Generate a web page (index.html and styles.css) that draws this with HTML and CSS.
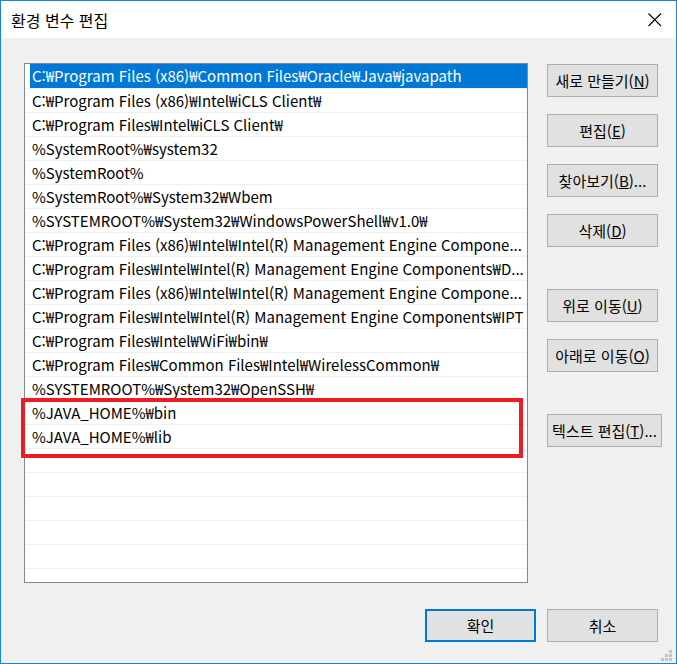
FILE: index.html
```html
<!DOCTYPE html>
<html lang="ko">
<head>
    <meta charset="UTF-8">
    <title>환경 변수 편집</title>
    <link rel="stylesheet" href="styles.css">
</head>
<body>
<div class="window">
    <div class="titlebar">
        <span class="title">환경 변수 편집</span>
        <svg class="close" width="14" height="14" viewBox="0 0 14 14">
            <path d="M0.5 0.5 L13 13 M13 0.5 L0.5 13" stroke="#000" stroke-width="1.1" fill="none"/>
        </svg>
    </div>

    <div class="content">
        <div class="main">
            <div class="list-wrap">
                <div class="list">
                    <div class="row selected"><span class="cell">C:₩Program Files (x86)₩Common Files₩Oracle₩Java₩javapath</span></div>
                    <div class="row"><span class="cell">C:₩Program Files (x86)₩Intel₩iCLS Client₩</span></div>
                    <div class="row"><span class="cell">C:₩Program Files₩Intel₩iCLS Client₩</span></div>
                    <div class="row"><span class="cell">%SystemRoot%₩system32</span></div>
                    <div class="row"><span class="cell">%SystemRoot%</span></div>
                    <div class="row"><span class="cell">%SystemRoot%₩System32₩Wbem</span></div>
                    <div class="row"><span class="cell">%SYSTEMROOT%₩System32₩WindowsPowerShell₩v1.0₩</span></div>
                    <div class="row"><span class="cell">C:₩Program Files (x86)₩Intel₩Intel(R) Management Engine Compone...</span></div>
                    <div class="row"><span class="cell">C:₩Program Files₩Intel₩Intel(R) Management Engine Components₩D...</span></div>
                    <div class="row"><span class="cell">C:₩Program Files (x86)₩Intel₩Intel(R) Management Engine Compone...</span></div>
                    <div class="row"><span class="cell">C:₩Program Files₩Intel₩Intel(R) Management Engine Components₩IPT</span></div>
                    <div class="row"><span class="cell">C:₩Program Files₩Intel₩WiFi₩bin₩</span></div>
                    <div class="row"><span class="cell">C:₩Program Files₩Common Files₩Intel₩WirelessCommon₩</span></div>
                    <div class="row"><span class="cell">%SYSTEMROOT%₩System32₩OpenSSH₩</span></div>
                    <div class="row"><span class="cell">%JAVA_HOME%₩bin</span></div>
                    <div class="row"><span class="cell">%JAVA_HOME%₩lib</span></div>
                    <div class="row"></div>
                    <div class="row"></div>
                    <div class="row"></div>
                    <div class="row"></div>
                    <div class="row"></div>
                    <div class="row"></div>
                </div>
                <div class="mark"></div>
            </div>

            <div class="side">
                <button class="btn">새로 만들기(<u>N</u>)</button>
                <button class="btn">편집(<u>E</u>)</button>
                <button class="btn">찾아보기(<u>B</u>)...</button>
                <button class="btn">삭제(<u>D</u>)</button>
                <button class="btn spaced">위로 이동(<u>U</u>)</button>
                <button class="btn">아래로 이동(<u>O</u>)</button>
                <button class="btn spaced wide">텍스트 편집(<u>T</u>)...</button>
            </div>
        </div>

        <div class="footer">
            <button class="btn default">확인</button>
            <button class="btn">취소</button>
        </div>
    </div>

    <svg class="grip" width="12" height="12" viewBox="0 0 12 12">
        <rect x="8" y="0" width="3" height="3" fill="#c3c3c3"/>
        <rect x="4" y="4" width="3" height="3" fill="#c3c3c3"/>
        <rect x="8" y="4" width="3" height="3" fill="#c3c3c3"/>
        <rect x="0" y="8" width="3" height="3" fill="#c3c3c3"/>
        <rect x="4" y="8" width="3" height="3" fill="#c3c3c3"/>
        <rect x="8" y="8" width="3" height="3" fill="#c3c3c3"/>
    </svg>
</div>
</body>
</html>
```

FILE: styles.css
```css
body {
    margin: 0;
    font-family: "Noto Sans CJK KR", "Noto Sans", sans-serif;
    font-size: 15px;
    color: #000;
}

.window {
    position: relative;
    width: 677px;
    height: 664px;
    box-sizing: border-box;
    border: 1px solid #1883d7;
    background: #f0f0f0;
    display: flex;
    flex-direction: column;
}

.titlebar {
    height: 37px;
    background: #fff;
    display: flex;
    align-items: center;
    justify-content: space-between;
    padding: 0 14px 0 10px;
}

.title {
    font-size: 16px;
    margin-top: 1px;
}

.close {
    margin-top: 1px;
}

.content {
    flex: 1;
    padding: 25px 18px 0 23px;
}

.main {
    display: flex;
    gap: 19px;
}

.list-wrap {
    position: relative;
}

.list {
    width: 504px;
    height: 520px;
    box-sizing: border-box;
    border: 1px solid #828790;
    background: #fff;
    overflow: hidden;
}

.row {
    height: 24px;
    box-sizing: border-box;
    margin-left: 1px;
    display: flex;
}

.row + .row {
    border-top: 1px solid #f0f0f0;
}

.cell {
    flex: 1;
    margin-left: 4px;
    padding-left: 2px;
    line-height: 23px;
    white-space: nowrap;
    overflow: hidden;
}

.row:first-child .cell {
    line-height: 24px;
}

.row.selected .cell {
    background: #0078d7;
    color: #fff;
}

/* red annotation box */
.mark {
    position: absolute;
    left: -3px;
    top: 335px;
    width: 502px;
    height: 60px;
    box-sizing: border-box;
    border: 4px solid #ed1c24;
}

.side {
    display: flex;
    flex-direction: column;
    align-items: flex-start;
    gap: 17px;
    padding-top: 1px;
}

.btn {
    width: 111px;
    height: 33px;
    box-sizing: border-box;
    border: 1px solid #adadad;
    background: #e1e1e1;
    font-family: "Noto Sans CJK KR", "Noto Sans", sans-serif;
    font-size: 15px;
    color: #000;
    padding: 0;
    white-space: nowrap;
}

.btn.spaced {
    margin-top: 25px;
}

.btn.wide {
    width: 115px;
}

.btn.default {
    border: 2px solid #0078d7;
}

.footer {
    display: flex;
    justify-content: flex-end;
    gap: 11px;
    margin-top: 26px;
}

.grip {
    position: absolute;
    right: 3px;
    bottom: 1px;
}
```
